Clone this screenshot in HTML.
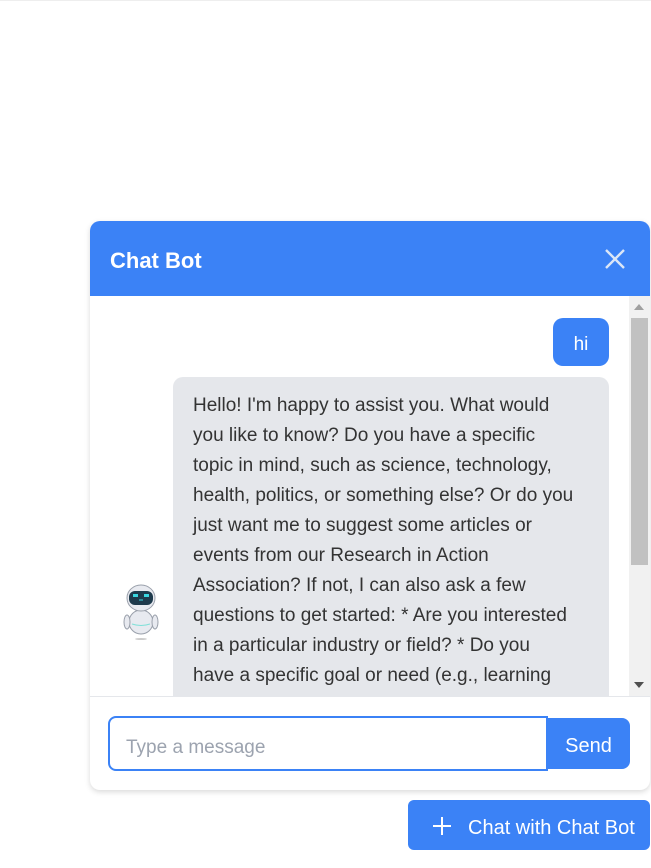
<!DOCTYPE html>
<html><head><meta charset="utf-8"><style>
*{box-sizing:border-box;margin:0;padding:0}
body{width:651px;height:868px;background:#fff;font-family:"Liberation Sans",sans-serif;position:relative;overflow:hidden}
.top{position:absolute;left:0;top:0;width:651px;height:1px;background:#eee}
.card{position:absolute;left:90px;top:221px;width:560px;height:569px;border-radius:10px;background:#fff;box-shadow:0 2px 6px rgba(0,0,0,.15);overflow:hidden}
.hdr{height:75px;background:#3b82f6;color:#fff;font-size:22px;font-weight:bold;padding:27px 0 0 20px}
.x{position:absolute;right:24px;top:27px;width:22px;height:22px}
.msgs{position:absolute;top:75px;left:0;width:560px;height:401px;overflow:hidden;border-bottom:1px solid #e5e7eb}
.hi{position:absolute;left:463px;top:22px;width:56px;height:48px;background:#3b82f6;border-radius:10px;color:#fff;font-size:19px;text-align:center;line-height:54px}
.bot{position:absolute;left:83px;top:81px;width:436px;height:400px;background:#e5e7eb;border-radius:10px;padding:14px 20px;color:#333;font-size:19px;line-height:30px;white-space:nowrap}
.sb{position:absolute;left:539px;top:0;width:21px;height:401px;background:#f1f1f1}
.thumb{position:absolute;left:2px;top:22px;width:17px;height:247px;background:#c1c1c1}
.inp{position:absolute;left:18px;top:495px;width:440px;height:55px;border:2px solid #3b82f6;border-radius:8px 0 0 8px;color:#9ca3af;font-size:19px;padding:19px 0 0 16px}
.send{position:absolute;left:457px;top:497px;width:83px;height:51px;background:#3b82f6;border-radius:0 8px 8px 0;color:#fff;font-size:20px;text-align:center;line-height:56px}
.open{position:absolute;left:408px;top:800px;width:242px;height:50px;background:#3b82f6;border-radius:6px;color:#fff;font-size:20px;line-height:56px;padding-left:60px}
</style></head><body>
<div class="top"></div>
<div class="card">
<div class="hdr">Chat Bot</div>
<svg class="x" viewBox="0 0 22 22"><path d="M2 2L20 20M20 2L2 20" stroke="#dbe6f7" stroke-width="2.4"/></svg>
<div class="msgs">
<div class="hi">hi</div>
<svg style="position:absolute;left:28px;top:286px" width="46" height="60" viewBox="0 0 46 60">
<ellipse cx="23" cy="40" rx="12" ry="12" fill="#e8eaf0" stroke="#9aa0ab"/>
<ellipse cx="9" cy="40" rx="3" ry="7" fill="#e8eaf0" stroke="#9aa0ab"/>
<ellipse cx="37" cy="40" rx="3" ry="7" fill="#e8eaf0" stroke="#9aa0ab"/>
<ellipse cx="23" cy="16" rx="14" ry="13" fill="#e8eaf0" stroke="#9aa0ab"/>
<rect x="11" y="9" width="24" height="14" rx="6" fill="#1e3a4c"/>
<rect x="15" y="12" width="5" height="3" fill="#3ad6e0"/><rect x="26" y="12" width="5" height="3" fill="#3ad6e0"/>
<path d="M21 18h4" stroke="#3ad6e0"/>
<path d="M14 42q9 3 18 0" stroke="#7fe0d8" fill="none"/>
<ellipse cx="23" cy="57" rx="6" ry="1" fill="#ccc"/>
</svg>
<div class="bot">Hello! I'm happy to assist you. What would<br>you like to know? Do you have a specific<br>topic in mind, such as science, technology,<br>health, politics, or something else? Or do you<br>just want me to suggest some articles or<br>events from our Research in Action<br>Association? If not, I can also ask a few<br>questions to get started: * Are you interested<br>in a particular industry or field? * Do you<br>have a specific goal or need (e.g., learning<br>the new research trends, networking</div>
<div class="sb"><div class="thumb"></div>
<svg style="position:absolute;left:5px;top:8px" width="10" height="6"><path d="M0 6L5 0L10 6Z" fill="#a0a0a0"/></svg>
<svg style="position:absolute;left:5px;top:386px" width="10" height="6"><path d="M0 0L5 6L10 0Z" fill="#505050"/></svg>
</div>
</div>
<div class="inp">Type a message</div>
<div class="send">Send</div>
</div>
<div class="open"><svg style="position:absolute;left:25px;top:17px" width="18" height="18"><path d="M9 0V18M0 9H18" stroke="#fff" stroke-width="2"/></svg>Chat with Chat Bot</div>
</body></html>
